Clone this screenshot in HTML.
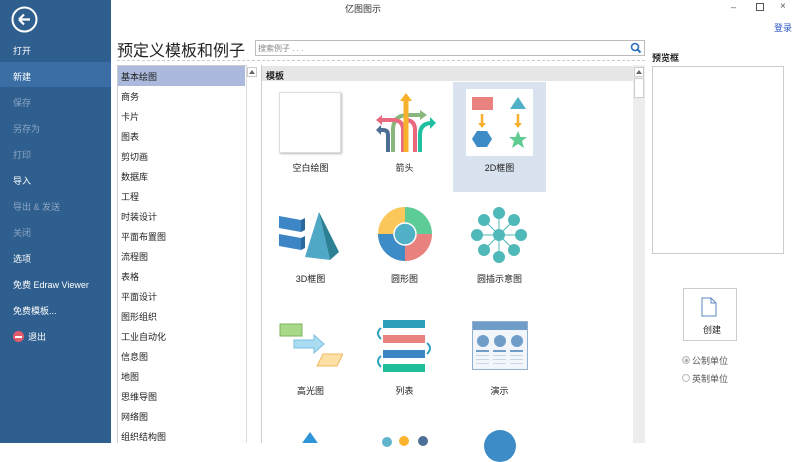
<!DOCTYPE html>
<html><head><meta charset="utf-8"><style>
*{margin:0;padding:0;box-sizing:border-box}
body{width:795px;height:443px;overflow:hidden;background:#fff;font-family:"Liberation Sans","Noto Sans CJK SC",sans-serif;font-size:9px;color:#222;position:relative}
.a{position:absolute}
#side{left:0;top:0;width:111px;height:443px;background:#2f5f8e}
.m{position:absolute;left:13px;color:#fff;font-size:9px}
.dim{color:#8ea6c3}
.cat{position:absolute;left:121px;font-size:9px;color:#222}
.lbl{position:absolute;width:93px;text-align:center;font-size:9px;color:#222}
</style></head><body>
<div id="side" class="a">
 <svg class="a" style="left:11px;top:6px" width="27" height="27"><circle cx="13.5" cy="13.5" r="12" stroke="#fff" stroke-width="2" fill="none"/><path d="M8 13.5h11M8 13.5l5-5M8 13.5l5 5" stroke="#fff" stroke-width="2.2" fill="none"/></svg>
 <div class="a" style="left:0;top:62px;width:111px;height:25px;background:#3a6ea5"></div>
 <div class="m" style="top:44px">打开</div>
 <div class="m" style="top:70px">新建</div>
 <div class="m dim" style="top:96px">保存</div>
 <div class="m dim" style="top:122px">另存为</div>
 <div class="m dim" style="top:148px">打印</div>
 <div class="m" style="top:174px">导入</div>
 <div class="m dim" style="top:200px">导出 &amp; 发送</div>
 <div class="m dim" style="top:226px">关闭</div>
 <div class="m" style="top:252px">选项</div>
 <div class="m" style="top:278px">免费 Edraw Viewer</div>
 <div class="m" style="top:304px">免费模板...</div>
 <div class="a" style="left:13px;top:331px;width:11px;height:11px;border-radius:50%;background:#e05a6a"></div>
 <div class="a" style="left:15px;top:336px;width:7px;height:2px;background:#fff"></div>
 <div class="m" style="left:28px;top:330px">退出</div>
</div>
<div class="a" style="left:345px;top:2px;font-size:9px;color:#333">亿图图示</div>
<div class="a" style="left:731px;top:2px;font-size:9px;color:#555">–</div>
<div class="a" style="left:756px;top:3px;width:8px;height:8px;border:1px solid #555"></div>
<div class="a" style="left:780px;top:1px;font-size:10px;color:#555">×</div>
<div class="a" style="left:774px;top:21px;font-size:9px;color:#2a56c6">登录</div>
<div class="a" style="left:117px;top:37px;font-size:16px;color:#222">预定义模板和例子</div>
<div class="a" style="left:255px;top:40px;width:390px;height:16px;border:1px solid #bbb"></div>
<div class="a" style="left:258px;top:43px;font-size:8px;color:#888">搜索例子 . . .</div>
<svg class="a" style="left:630px;top:42px" width="12" height="12"><circle cx="5" cy="5" r="3.5" stroke="#2a6fb8" stroke-width="1.6" fill="none"/><path d="M7.5 7.5l3 3" stroke="#2a6fb8" stroke-width="2"/></svg>
<div class="a" style="left:117px;top:60px;width:528px;border-top:1px dashed #ccc"></div>
<!-- category list -->
<div class="a" style="left:117px;top:65px;width:130px;height:378px;border:1px solid #ccc;border-bottom:none"></div>
<div class="a" style="left:118px;top:66px;width:127px;height:20px;background:#aab9dc"></div>
<div class="a" style="left:246px;top:65px;width:12px;height:378px;background:#fff;border-left:1px solid #ddd"></div>
<div class="a" style="left:247px;top:67px;width:10px;height:10px;border:1px solid #ccc"></div>
<svg class="a" style="left:249px;top:70px" width="6" height="4"><path d="M0 4L3 0L6 4z" fill="#666"/></svg>
<div class="cat" style="top:70px">基本绘图</div>
<div class="cat" style="top:90px">商务</div>
<div class="cat" style="top:110px">卡片</div>
<div class="cat" style="top:130px">图表</div>
<div class="cat" style="top:150px">剪切画</div>
<div class="cat" style="top:170px">数据库</div>
<div class="cat" style="top:190px">工程</div>
<div class="cat" style="top:210px">时装设计</div>
<div class="cat" style="top:230px">平面布置图</div>
<div class="cat" style="top:250px">流程图</div>
<div class="cat" style="top:270px">表格</div>
<div class="cat" style="top:290px">平面设计</div>
<div class="cat" style="top:310px">图形组织</div>
<div class="cat" style="top:330px">工业自动化</div>
<div class="cat" style="top:350px">信息图</div>
<div class="cat" style="top:370px">地图</div>
<div class="cat" style="top:390px">思维导图</div>
<div class="cat" style="top:410px">网络图</div>
<div class="cat" style="top:430px">组织结构图</div>
<!-- template panel -->
<div class="a" style="left:261px;top:65px;width:384px;height:378px;border-left:1px solid #ccc"></div>
<div class="a" style="left:262px;top:66px;width:371px;height:15px;background:#e6e6e6"></div>
<div class="a" style="left:266px;top:69px;font-size:9px;font-weight:bold">模板</div>
<div class="a" style="left:633px;top:65px;width:12px;height:378px;background:#ededed"></div>
<div class="a" style="left:634px;top:67px;width:10px;height:10px;background:#fff;border:1px solid #ccc"></div>
<svg class="a" style="left:636px;top:70px" width="6" height="4"><path d="M0 4L3 0L6 4z" fill="#666"/></svg>
<div class="a" style="left:634px;top:78px;width:10px;height:20px;background:#fff;border:1px solid #ccc"></div>
<div class="a" style="left:453px;top:82px;width:93px;height:110px;background:#d8e3ef"></div>
<!-- row1 -->
<div class="a" style="left:279px;top:92px;width:62px;height:61px;background:#fff;border:1px solid #ddd;box-shadow:1px 1px 2px #bbb"></div>
<svg class="a" style="left:374px;top:90px" width="62" height="64">
<path d="M19 62V40q0-15 15-15h12" stroke="#89b77d" stroke-width="4" fill="none"/><path d="M46 20l7 5-7 5z" fill="#89b77d"/>
<path d="M29 62V40q0-10-10-10H8" stroke="#e9697f" stroke-width="4" fill="none"/><path d="M8 25l-6 5 6 5z" fill="#e9697f"/>
<path d="M41 62V40q0-10-10-10" stroke="#e9697f" stroke-width="4" fill="none"/>
<path d="M32 62V10" stroke="#f6b02c" stroke-width="5" fill="none"/><path d="M26 11l6-8 6 8z" fill="#f6b02c"/>
<path d="M46 62V45q0-12 12-12" stroke="#20bfa0" stroke-width="4" fill="none"/><path d="M56 27l6 6-6 6z" fill="#20bfa0"/>
<path d="M14 62V45q0-5-5-5H7" stroke="#4e6f95" stroke-width="4" fill="none"/><path d="M7 35l-5 5 5 5z" fill="#4e6f95"/>
</svg>
<div class="a" style="left:466px;top:89px;width:67px;height:67px;background:#fff"></div>
<svg class="a" style="left:466px;top:89px" width="67" height="67">
<rect x="6" y="8" width="21" height="13" fill="#e9827f"/><path d="M52 8l8 12H44z" fill="#4fb0c6"/>
<path d="M16 25v10" stroke="#f6b02c" stroke-width="2.5"/><path d="M12 34h8l-4 5z" fill="#f6b02c"/>
<path d="M52 25v10" stroke="#f6b02c" stroke-width="2.5"/><path d="M48 34h8l-4 5z" fill="#f6b02c"/>
<path d="M11 42h10l5 8-5 8H11l-5-8z" fill="#3d8cc8"/>
<path d="M52 42l2.5 6h6.5l-5 4 2 7-6-4-6 4 2-7-5-4h6.5z" fill="#5fcb91"/>
</svg>
<div class="lbl" style="left:264px;top:161px">空白绘图</div>
<div class="lbl" style="left:358px;top:161px">箭头</div>
<div class="lbl" style="left:453px;top:161px">2D框图</div>
<!-- row2 -->
<svg class="a" style="left:279px;top:212px" width="62" height="50">
<path d="M0 4l22 4v12L0 16z" fill="#3d86c6"/><path d="M22 8l4-2v12l-4 2z" fill="#2a6aa0"/>
<path d="M0 22l22 4v12L0 34z" fill="#3d86c6"/><path d="M22 26l4-2v12l-4 2z" fill="#2a6aa0"/>
<path d="M40 0L26 45l25 3z" fill="#4fa9c6"/><path d="M40 0l11 48 9-8z" fill="#2d7f94"/>
</svg>
<svg class="a" style="left:377px;top:206px" width="56" height="56">
<path d="M28 28V1a27 27 0 0 1 27 27z" fill="#5ecc96"/><path d="M28 28h27a27 27 0 0 1-27 27z" fill="#e9827f"/>
<path d="M28 28v27A27 27 0 0 1 1 28z" fill="#3d8cc8"/><path d="M28 28H1A27 27 0 0 1 28 1z" fill="#fbc65a"/>
<circle cx="28" cy="28" r="11" fill="#4fb0c6" stroke="#fff" stroke-width="1.5"/>
</svg>
<svg class="a" style="left:470px;top:206px" width="58" height="58">
<g stroke="#4fb8b8" stroke-width="1"><path d="M29 29L29 7M29 29L29 51M29 29L7 29M51 29L29 29M29 29L13 13M29 29L45 13M29 29L13 45M29 29L45 45"/></g>
<g fill="#4fb8b8"><circle cx="29" cy="29" r="6"/><circle cx="29" cy="7" r="6"/><circle cx="29" cy="51" r="6"/><circle cx="7" cy="29" r="6"/><circle cx="51" cy="29" r="6"/><circle cx="14" cy="14" r="6"/><circle cx="44" cy="14" r="6"/><circle cx="14" cy="44" r="6"/><circle cx="44" cy="44" r="6"/></g>
</svg>
<div class="lbl" style="left:264px;top:272px">3D框图</div>
<div class="lbl" style="left:358px;top:272px">圆形图</div>
<div class="lbl" style="left:453px;top:272px">圆插示意图</div>
<!-- row3 -->
<svg class="a" style="left:279px;top:322px" width="64" height="48">
<rect x="1" y="2" width="22" height="12" fill="#a8d88a" stroke="#7ab65a"/>
<path d="M15 18h20v-5l10 9-10 9v-5H15z" fill="#aadcf2" stroke="#7ac0e0"/>
<path d="M44 32h20l-6 12H38z" fill="#fde0a6" stroke="#f0b860"/>
</svg>
<svg class="a" style="left:373px;top:320px" width="62" height="52">
<rect x="10" y="0" width="42" height="8" fill="#2aa0bb"/><rect x="10" y="15" width="42" height="8" fill="#e9827f"/>
<rect x="10" y="30" width="42" height="8" fill="#3d86c6"/><rect x="10" y="44" width="42" height="8" fill="#20bf9c"/>
<path d="M8 8q-6 5 0 11M54 23q6 5 0 11M8 36q-6 5 0 11" stroke="#2aa0bb" stroke-width="2" fill="none"/>
</svg>
<svg class="a" style="left:472px;top:321px" width="56" height="49">
<rect x="0.5" y="0.5" width="55" height="48" fill="#f2f6fa" stroke="#8fb0d0"/><rect x="1" y="1" width="54" height="8" fill="#6f9dc8"/>
<circle cx="11" cy="20" r="6" fill="#6f9dc8"/><circle cx="28" cy="20" r="6" fill="#6f9dc8"/><circle cx="45" cy="20" r="6" fill="#6f9dc8"/>
<g fill="#6f9dc8"><rect x="4" y="29" width="13" height="2"/><rect x="21" y="29" width="13" height="2"/><rect x="38" y="29" width="13" height="2"/></g>
<g fill="#c8d6e6"><rect x="4" y="34" width="13" height="1"/><rect x="21" y="34" width="13" height="1"/><rect x="38" y="34" width="13" height="1"/><rect x="4" y="38" width="13" height="1"/><rect x="21" y="38" width="13" height="1"/><rect x="38" y="38" width="13" height="1"/><rect x="4" y="42" width="13" height="1"/><rect x="21" y="42" width="13" height="1"/><rect x="38" y="42" width="13" height="1"/></g>
</svg>
<div class="lbl" style="left:264px;top:384px">高光图</div>
<div class="lbl" style="left:358px;top:384px">列表</div>
<div class="lbl" style="left:453px;top:384px">演示</div>
<!-- row4 -->
<svg class="a" style="left:300px;top:432px" width="20" height="11"><path d="M10 0L20 14H0z" fill="#2f95d8"/></svg>
<div class="a" style="left:382px;top:437px;width:10px;height:10px;border-radius:50%;background:#5fb4cc"></div>
<div class="a" style="left:399px;top:436px;width:10px;height:10px;border-radius:50%;background:#fbb42c"></div>
<div class="a" style="left:418px;top:436px;width:10px;height:10px;border-radius:50%;background:#4e6f95"></div>
<div class="a" style="left:484px;top:430px;width:32px;height:32px;border-radius:50%;background:#3d8cc8"></div>
<!-- right -->
<div class="a" style="left:652px;top:51px;font-size:9px;font-weight:bold">预览框</div>
<div class="a" style="left:652px;top:66px;width:132px;height:188px;border:1px solid #ccc"></div>
<div class="a" style="left:683px;top:288px;width:54px;height:53px;border:1px solid #ccc"></div>
<svg class="a" style="left:701px;top:297px" width="16" height="20"><path d="M1 1h9l5 5v13H1z M10 1v5h5" stroke="#5a88c0" stroke-width="1" fill="#fff"/></svg>
<div class="a" style="left:703px;top:323px;font-size:9px">创建</div>
<div class="a" style="left:682px;top:356px;width:8px;height:8px;border-radius:50%;border:1px solid #bbb;background:#eee"></div>
<div class="a" style="left:685px;top:359px;width:3px;height:3px;border-radius:50%;background:#aaa"></div>
<div class="a" style="left:692px;top:354px;font-size:9px;color:#555">公制单位</div>
<div class="a" style="left:682px;top:374px;width:8px;height:8px;border-radius:50%;border:1px solid #bbb"></div>
<div class="a" style="left:692px;top:372px;font-size:9px;color:#555">英制单位</div>
</body></html>
